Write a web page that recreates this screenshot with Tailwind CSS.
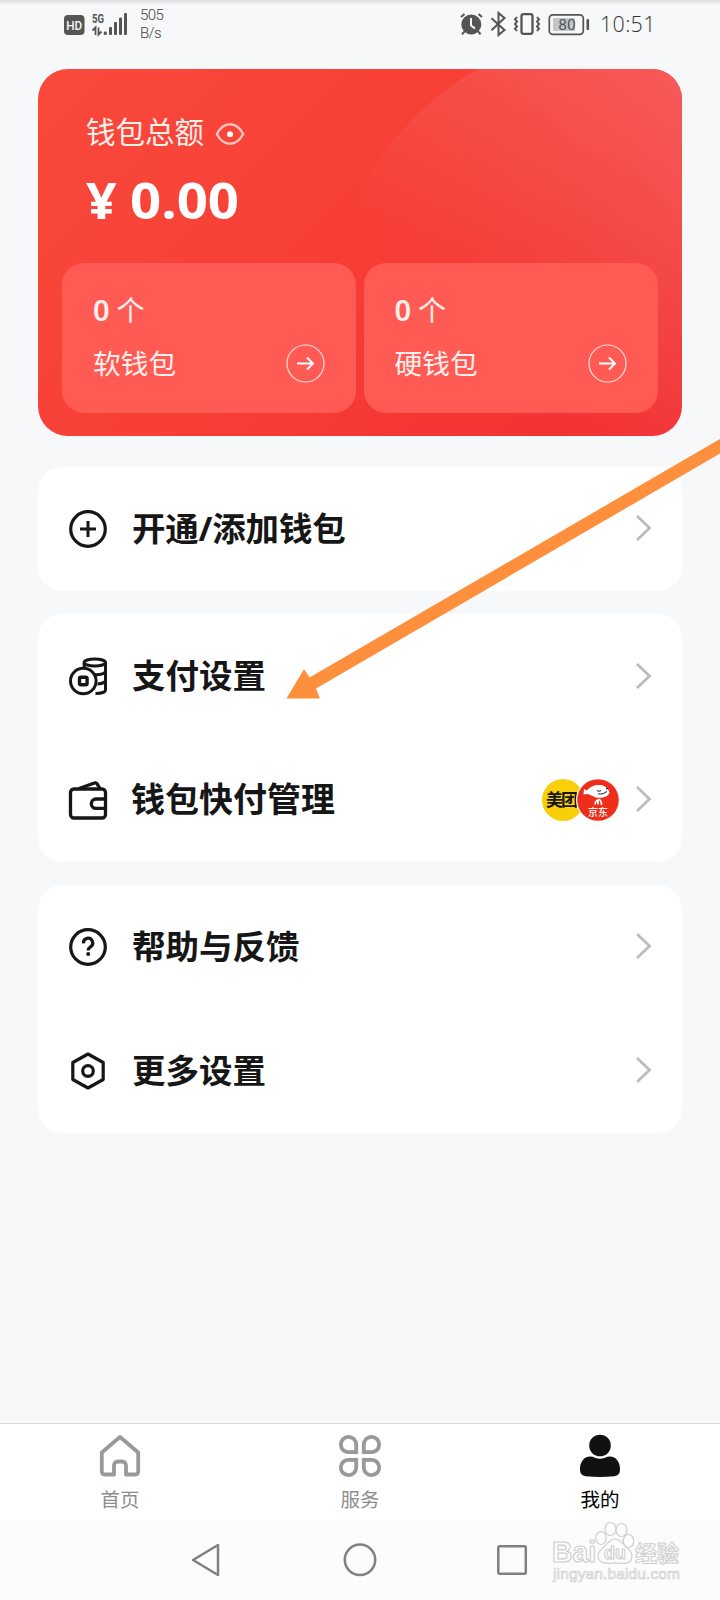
<!DOCTYPE html>
<html lang="zh-CN">
<head>
<meta charset="utf-8">
<title>我的</title>
<script src="https://cdn.jsdelivr.net/npm/@tailwindcss/browser@4"></script>
</head>
<body class="relative flex h-[1600px] w-[720px] flex-col overflow-hidden bg-[#f6f8fa] font-['Noto_Sans','Noto_Sans_CJK_SC',sans-serif] text-[#161616]">
  <!-- status bar -->
  <header class="flex h-[69px] shrink-0 items-start bg-linear-to-b from-[#dcdddf] from-0% to-[#f6f8fa] to-[5px] text-[#555]">
    <svg class="ml-[64px] mt-[12px] h-[26px] w-[66px] shrink-0" viewBox="64 12 66 26" fill="#555">
      <rect x="64" y="15" width="20.500" height="20" rx="4"/>
      <text x="74.200" y="30" font-family="Roboto" font-weight="500" font-size="13.500" text-anchor="middle" textLength="16" lengthAdjust="spacingAndGlyphs" fill="#f6f8fa">HD</text>
      <text x="92" y="23" font-family="Roboto" font-weight="700" font-size="13" textLength="12" lengthAdjust="spacingAndGlyphs">5G</text>
      <path d="M92.500 30.500l3-3v7.500M98.500 27.500v7l3-3" fill="none" stroke="#555" stroke-width="1.800"/>
      <rect x="103.800" y="31.500" width="3" height="3.500" rx="1"/>
      <rect x="109" y="27" width="3" height="8" rx="1"/>
      <rect x="114" y="22" width="3" height="13" rx="1"/>
      <rect x="119" y="17.500" width="3" height="17.500" rx="1"/>
      <rect x="124" y="13" width="3" height="22" rx="1"/>
    </svg>
    <div class="ml-[10px] mt-[6px] font-[Roboto] text-[15px] font-light leading-[18px] tracking-[-0.6px] text-[#444]">505<br>B/s</div>
    <svg class="ml-auto mt-[10px] h-[28px] w-[132px] shrink-0" viewBox="459 10 132 28" fill="none" stroke="#555" stroke-width="2">
      <circle cx="471.300" cy="24.500" r="10" fill="#555" stroke="none"/>
      <path d="M461 17l3.500-3M482 17l-3.500-3M465 31l-3 3.200M477.600 31l3 3.200"/>
      <path d="M471 18v7.500l4 3" stroke="#f6f8fa"/>
      <path d="M491.500 18.200l13 11.800-6 5V13l6 5-13 12.300"/>
      <rect x="521.500" y="14.200" width="11" height="19.600" rx="2" stroke-width="2.300"/>
      <path d="M517 17l-2 2.500 2 2-2 2.500 2 2.500-2 2 2 2.500M537 17l2 2.500-2 2 2 2.500-2 2.500 2 2-2 2.500" stroke-width="2"/>
      <rect x="549.300" y="14.800" width="34" height="19.500" rx="3.500" stroke-width="1.700"/>
      <rect x="553" y="18" width="22" height="13" fill="#c4c5c7" stroke="none"/>
      <rect x="586.500" y="19" width="2.600" height="11" rx="1" fill="#555" stroke="none"/>
      <text x="567" y="30" font-family="Roboto" font-size="15.500" text-anchor="middle" fill="#555" stroke="none">80</text>
    </svg>
    <div class="ml-[9px] mr-[65px] mt-[9px] w-[55px] whitespace-nowrap font-['Open_Sans'] text-[21.5px] font-light leading-[30px] tracking-[0.3px] text-[#333]">10:51</div>
  </header>

  <main class="mx-[38px] flex flex-1 flex-col">
    <!-- balance card -->
    <section class="relative h-[367px] shrink-0 overflow-hidden rounded-[30px] bg-linear-[135deg,#f94a3c_0%,#f73e35_50%,#f12f33_100%]">
      <div class="absolute left-[285px] top-[-42px] size-[620px] rounded-full bg-linear-to-bl from-[#f56262] from-15% to-[#f55050]/0 to-62%"></div>
      <div class="relative flex h-full flex-col px-[24px] pb-[23px] pt-[42px] text-white">
        <div class="flex h-[42px] items-center gap-[11px] pl-[24px]">
          <span class="text-[29.5px] leading-[42px] text-[#ffeeea]">钱包总额</span>
          <svg class="mt-[4px] h-[24px] w-[30px]" viewBox="0 0 30 24" fill="none" stroke="#ffc4bc" stroke-width="2.400"><path d="M1.800 12C5 6 9.500 2.200 15 2.200S25 6 28.200 12C25 18 20.500 21.800 15 21.800S5 18 1.800 12z"/><circle cx="15" cy="12.300" r="3" fill="#fff" stroke="none"/></svg>
        </div>
        <div class="ml-[24px] mt-[13px] flex h-[68px] items-center gap-[13px] font-['Open_Sans'] text-[50px] font-bold leading-[68px]"><span class="w-[31px] origin-left scale-x-[1.08]">¥</span><span class="origin-left scale-x-[1.09]">0.00</span></div>
        <div class="mt-auto flex gap-[8px]">
          <div class="flex h-[150px] w-[294px] flex-col rounded-[22px] bg-[#ff5a53] pl-[31px] pr-[31px] pt-[26px] text-[#fff0ed]">
            <div class="flex items-center gap-[7px] text-[28px] leading-[42px]"><span class="text-[29px] font-semibold">0</span><span>个</span></div>
            <div class="mt-[11px] flex items-center justify-between"><span class="text-[27.7px] leading-[42px]">软钱包</span>
              <svg class="size-[39px]" viewBox="0 0 39 39" fill="none" stroke="#ffe1dc"><circle cx="19.500" cy="19.500" r="18.500" stroke-width="1.200"/><path d="M11 19.500h16M21 13.500l6 6-6 6" stroke="#fff" stroke-width="1.900"/></svg></div>
          </div>
          <div class="flex h-[150px] w-[295px] flex-col rounded-[22px] bg-[#ff5a53] pl-[31px] pr-[31px] pt-[26px] text-[#fff0ed]">
            <div class="flex items-center gap-[7px] text-[28px] leading-[42px]"><span class="text-[29px] font-semibold">0</span><span>个</span></div>
            <div class="mt-[11px] flex items-center justify-between"><span class="text-[27.7px] leading-[42px]">硬钱包</span>
              <svg class="size-[39px]" viewBox="0 0 39 39" fill="none" stroke="#ffe1dc"><circle cx="19.500" cy="19.500" r="18.500" stroke-width="1.200"/><path d="M11 19.500h16M21 13.500l6 6-6 6" stroke="#fff" stroke-width="1.900"/></svg></div>
          </div>
        </div>
      </div>
    </section>

    <section class="mt-[31px] rounded-[24px] bg-white">
      <div class="flex h-[124px] items-center pl-[30px] pr-[30px]">
        <svg class="size-[40px]" viewBox="0 0 40 40" fill="none" stroke="#161616" stroke-width="3.200"><circle cx="20" cy="20" r="17.300"/><path d="M20 12v16M12 20h16" stroke-width="3"/></svg>
        <span class="mb-[2px] ml-[24px] text-[33.5px] font-bold tracking-[-0.2px]">开通/添加钱包</span>
        <svg class="mb-[2px] ml-auto h-[28px] w-[17px]" viewBox="0 0 17 28" fill="none" stroke="#bcbcbc" stroke-width="2.800"><path d="M2 2l12.500 12L2 26"/></svg>
      </div>
    </section>

    <section class="mt-[23px] rounded-[24px] bg-white">
      <div class="flex h-[123px] items-center pl-[30px] pr-[30px]">
        <svg class="mt-[3px] size-[40px]" viewBox="0 0 40 40" fill="none" stroke="#161616" stroke-width="3"><path d="M16.200 6v4M37.500 6v27c0 2-4 3.500-10 3.500M37.500 14c0 2.500-5 4-11 3.600M37.500 23c0 2-3 3.800-8 4"/><ellipse cx="26.800" cy="5.500" rx="10.700" ry="3.600"/><circle cx="15.300" cy="24" r="12.800" fill="#fff"/><rect x="11.500" y="20.200" width="7.600" height="7.600" rx="1.500" stroke-width="3.400"/></svg>
        <span class="ml-[24px] text-[33.5px] font-bold">支付设置</span>
        <svg class="ml-auto h-[28px] w-[17px]" viewBox="0 0 17 28" fill="none" stroke="#bcbcbc" stroke-width="2.800"><path d="M2 2l12.500 12L2 26"/></svg>
      </div>
      <div class="flex h-[125px] items-center pl-[30px] pr-[30px]">
        <svg class="size-[40px]" viewBox="0 0 40 40" fill="none" stroke="#161616" stroke-width="3.300" stroke-linejoin="round"><rect x="2.500" y="9" width="35" height="29" rx="3.500"/><path d="M11 8.500L26.500 3q1.600-.5 2.600.8L32 8.500M37.500 19H28a4.700 4.700 0 0 0 0 9.400h9.500"/></svg>
        <span class="ml-[23px] text-[34px] font-bold">钱包快付管理</span>
        <svg class="ml-auto h-[44px] w-[80px]" viewBox="0 0 80 44">
          <circle cx="22" cy="22" r="21" fill="#f9cf09"/>
          <text x="5" y="28" font-family="Noto Sans CJK SC" font-weight="700" font-size="17" textLength="32" fill="#161616">美团</text>
          <circle cx="57" cy="22" r="22" fill="#fff"/><circle cx="57" cy="22" r="20.800" fill="#ee2d1b"/>
          <path d="M42.500 16.500l.5-5.500 3 1.500c3-4.500 10-6.500 16-5l4.500 2.500 2 4.500c-1 4-6.500 6-13 5.200L47 16z" fill="#fff"/><path d="M56 12.300a2.700 2.700 0 0 0 4 0M57 15.800q5 1 9-2.500" stroke="#333" stroke-width="1.100" fill="none"/><circle cx="66" cy="10.600" r="1" fill="#222"/><path d="M54 26.500q0-3.500 4-5 2.500 1 2.500 5.500M57 22.500v4" fill="none" stroke="#fff" stroke-width="1.700"/>
          <text x="57" y="37.500" font-family="Noto Sans CJK SC" font-weight="500" font-size="10" text-anchor="middle" fill="#fff">京东</text>
        </svg>
        <svg class="mb-[1px] ml-[14px] h-[28px] w-[17px]" viewBox="0 0 17 28" fill="none" stroke="#bcbcbc" stroke-width="2.800"><path d="M2 2l12.500 12L2 26"/></svg>
      </div>
    </section>

    <section class="mt-[23px] rounded-[24px] bg-white">
      <div class="flex h-[124px] items-center pl-[30px] pr-[30px]">
        <svg class="size-[40px]" viewBox="0 0 40 40" fill="none" stroke="#161616" stroke-width="3.200"><circle cx="20" cy="20" r="17.300"/><path d="M15.500 16.300a4.600 4.600 0 1 1 7 3.500c-1.800 1.100-2.300 1.700-2.300 3.700"/><circle cx="20.200" cy="27" r="2" fill="#161616" stroke="none"/></svg>
        <span class="mb-[2px] ml-[24px] text-[33.5px] font-bold">帮助与反馈</span>
        <svg class="mb-[2px] ml-auto h-[28px] w-[17px]" viewBox="0 0 17 28" fill="none" stroke="#bcbcbc" stroke-width="2.800"><path d="M2 2l12.500 12L2 26"/></svg>
      </div>
      <div class="flex h-[124px] items-center pl-[30px] pr-[30px]">
        <svg class="size-[40px]" viewBox="0 0 40 40" fill="none" stroke="#161616" stroke-width="3.200" stroke-linejoin="round"><path d="M20 3l15.200 8.500v17L20 37 4.800 28.500v-17z"/><circle cx="20" cy="20" r="5.300"/></svg>
        <span class="mb-[2px] ml-[24px] text-[33.5px] font-bold">更多设置</span>
        <svg class="mb-[2px] ml-auto h-[28px] w-[17px]" viewBox="0 0 17 28" fill="none" stroke="#bcbcbc" stroke-width="2.800"><path d="M2 2l12.500 12L2 26"/></svg>
      </div>
    </section>
  </main>

  <!-- tab bar -->
  <nav class="grid h-[97px] shrink-0 grid-cols-3 border-t border-[#dadcdf] bg-white text-[19.5px] leading-[28px] text-[#8d8d8d]">
    <div class="flex flex-col items-center pt-[10px]">
      <svg class="size-[44px]" viewBox="0 0 44 44" fill="none" stroke="#999" stroke-width="3.800" stroke-linejoin="round"><path d="M22 3L40.200 18.500V38a3 3 0 0 1-3 2.500H28V31.500a4 4 0 0 0-4-4h-4a4 4 0 0 0-4 4v9H6.800A3 3 0 0 1 3.800 38V18.500z"/></svg>
      <span class="mt-[8px]">首页</span>
    </div>
    <div class="flex flex-col items-center pt-[10px]">
      <svg class="size-[44px]" viewBox="0 0 44 44" fill="none" stroke="#999" stroke-width="3.800"><path d="M18.200 18.200H11a7.700 7.700 0 1 1 7.200-8zM25.800 18.200H33a7.700 7.700 0 1 0-7.200-8zM18.200 25.800H11a7.700 7.700 0 1 0 7.200 8zM25.800 25.800H33a7.700 7.700 0 1 1-7.200 8z"/></svg>
      <span class="mt-[8px]">服务</span>
    </div>
    <div class="flex flex-col items-center pt-[10px] text-black">
      <svg class="size-[44px]" viewBox="0 0 44 44" fill="#111"><circle cx="22" cy="11.500" r="10.800"/><path d="M12 22.500q3 0 5 1.200 5 2 10 0 2-1.200 5-1.200c6 0 10 5.500 10 12.500 0 5-2 6.500-6 7.200q-14 1.600-28 0c-4-.7-6-2.200-6-7.200 0-7 4-12.500 10-12.500z"/></svg>
      <span class="mt-[8px]">我的</span>
    </div>
  </nav>

  <!-- system navigation -->
  <footer class="flex h-[80px] shrink-0 items-start bg-[#fcfcfc]">
    <svg class="h-[80px] w-[720px]" viewBox="0 1520 720 80" fill="none" stroke="#808080" stroke-width="2.500" stroke-linejoin="round">
      <path d="M193 1560l25-15v30z"/><circle cx="360" cy="1559.800" r="15.200"/><rect x="498.300" y="1546.300" width="27.500" height="27.500" rx="1.500"/>
      <g fill="#fcfcfc" stroke="#cecece" stroke-width="1.200">
        <text x="552" y="1562" font-family="Liberation Sans" font-weight="700" font-size="30" textLength="44" lengthAdjust="spacingAndGlyphs">Bai</text>
        <ellipse cx="601" cy="1538" rx="5.200" ry="6.500"/><ellipse cx="610.500" cy="1529" rx="5.500" ry="6.500"/><ellipse cx="621.500" cy="1530" rx="5.500" ry="6.500"/><ellipse cx="628.500" cy="1541" rx="5.200" ry="6.500"/>
        <path d="M615 1539c5 0 7 4 10 7s7 5 7 10c0 8-7 8-17 7-10 1-17 0-17-7 0-5 4-7 7-10s5-7 10-7z"/>
        <text x="604" y="1559" font-family="Liberation Sans" font-weight="700" font-size="18" textLength="22" stroke-width="1">du</text>
        <text x="635" y="1561" font-family="Noto Sans CJK SC" font-weight="700" font-size="22" textLength="44" stroke-width="1">经验</text>
        <text x="553" y="1579" font-family="Liberation Sans" font-size="15.500" textLength="127" stroke-width=".7">jingyan.baidu.com</text>
      </g>
    </svg>
  </footer>

  <!-- pointer arrow over the list -->
  <svg class="pointer-events-none absolute left-[280px] top-[430px] h-[280px] w-[440px]" viewBox="280 430 440 280"><path d="M720 439L309.500 677.500 304 669 286.500 698.500H320L316 688.500 720 453.500z" fill="#fd8f3d"/></svg>
</body>
</html>
